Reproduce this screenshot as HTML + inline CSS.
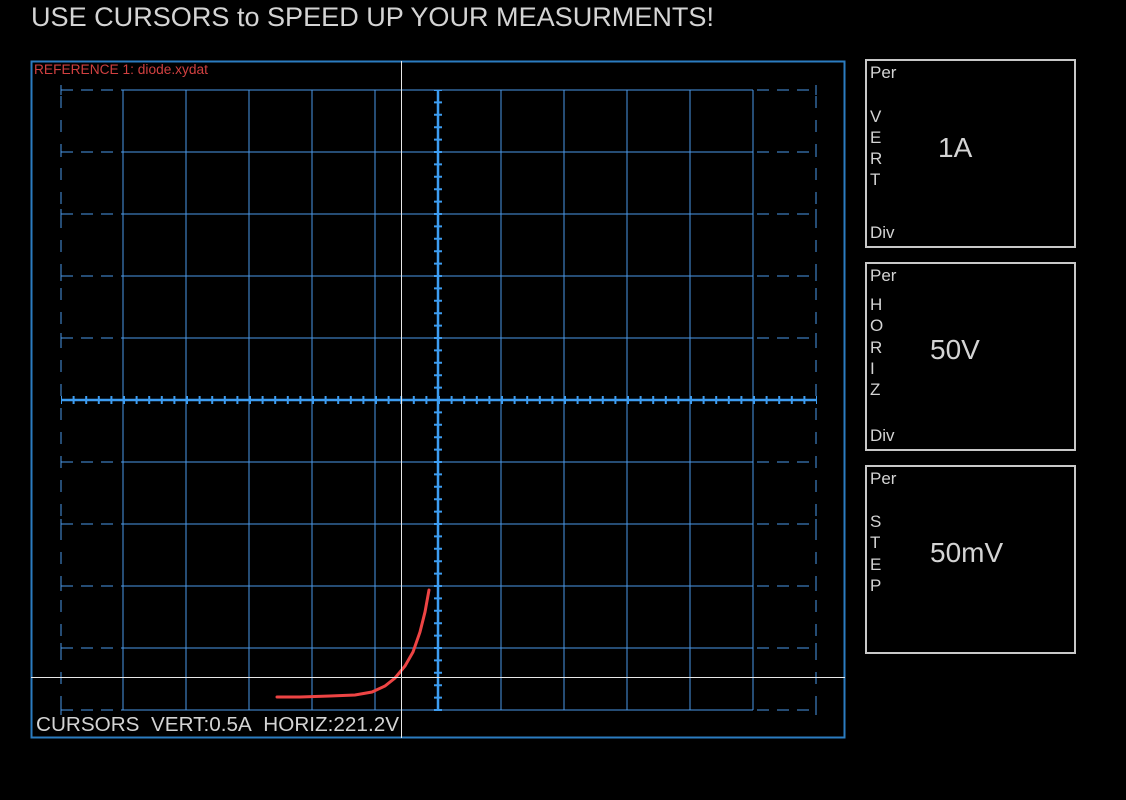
<!DOCTYPE html>
<html><head><meta charset="utf-8"><style>
html,body{margin:0;padding:0;background:#000;width:1126px;height:800px;overflow:hidden}
svg{display:block}
text{font-family:"Liberation Sans",Arial,sans-serif;fill:#d4d4d4}
</style></head><body>
<svg width="1126" height="800" viewBox="0 0 1126 800">
<text x="31" y="26" font-size="26.5" textLength="683" lengthAdjust="spacingAndGlyphs">USE CURSORS to SPEED UP YOUR MEASURMENTS!</text>
<rect x="31.5" y="61.5" width="813" height="676" fill="none" stroke="#2b7cc0" stroke-width="2"/>
<text x="34" y="74" font-size="13.5" textLength="174" lengthAdjust="spacingAndGlyphs" style="fill:#d04040">REFERENCE 1: diode.xydat</text>
<g stroke="#4a98e8" stroke-width="1">
<path d="M123 90V710M186 90V710M249 90V710M312 90V710M375 90V710M501 90V710M564 90V710M627 90V710M690 90V710M753 90V710"/>
<path d="M123 90H753M123 152H753M123 214H753M123 276H753M123 338H753M123 462H753M123 524H753M123 586H753M123 648H753M123 710H753"/>
<path stroke-dasharray="12 8" d="M61 90H123M61 152H123M61 214H123M61 276H123M61 338H123M61 462H123M61 524H123M61 586H123M61 648H123M61 710H123M757 90H816M757 152H816M757 214H816M757 276H816M757 338H816M757 462H816M757 524H816M757 586H816M757 648H816M757 710H816"/>
<path stroke-dasharray="12 12" stroke-dashoffset="-6" d="M61 90V710M816 90V710"/>
<path d="M61 85V95M61 147V157M61 209V219M61 271V281M61 333V343M61 457V467M61 519V529M61 581V591M61 643V653M61 705V715M816 85V95M816 147V157M816 209V219M816 271V281M816 333V343M816 457V467M816 519V529M816 581V591M816 643V653M816 705V715"/>
</g>
<g stroke="#3d9cf0">
<path d="M61 400H816" stroke-width="2.5"/>
<path d="M438 90V710" stroke-width="2.5"/>
<path d="M61 400H817" stroke-width="8" stroke-dasharray="2 10.6" stroke-dashoffset="1"/>
<path d="M438 90V711" stroke-width="8" stroke-dasharray="2 10.4" stroke-dashoffset="1"/>
</g>
<path d="M277 697 L300 697 L330 696 L355 695 L372 692 L385 686 L395 678 L405 666 L413 652 L420 632 L425 612 L429 590" fill="none" stroke="#ee4444" stroke-width="3" stroke-linecap="round"/>
<g stroke="#e8e8e8" stroke-width="1">
<path d="M401.5 61V738M31 677.5H845"/>
</g>
<text x="36" y="731" font-size="20" textLength="363" lengthAdjust="spacingAndGlyphs">CURSORS&#160; VERT:0.5A&#160; HORIZ:221.2V</text>
<g fill="none" stroke="#c8c8c8" stroke-width="2">
<rect x="866" y="60" width="209" height="187"/>
<rect x="866" y="263" width="209" height="187"/>
<rect x="866" y="466" width="209" height="187"/>
</g>
<g font-size="17">
<text x="870" y="78">Per</text>
<text x="870" y="122">V</text><text x="870" y="143">E</text><text x="870" y="164">R</text><text x="870" y="185">T</text>
<text x="870" y="238">Div</text>
<text x="870" y="281">Per</text>
<text x="870" y="310">H</text><text x="870" y="331">O</text><text x="870" y="353">R</text><text x="870" y="374">I</text><text x="870" y="395">Z</text>
<text x="870" y="441">Div</text>
<text x="870" y="484">Per</text>
<text x="870" y="527">S</text><text x="870" y="548">T</text><text x="870" y="570">E</text><text x="870" y="591">P</text>
</g>
<g font-size="28">
<text x="938" y="157">1A</text>
<text x="930" y="359">50V</text>
<text x="930" y="562">50mV</text>
</g>
</svg>
</body></html>
